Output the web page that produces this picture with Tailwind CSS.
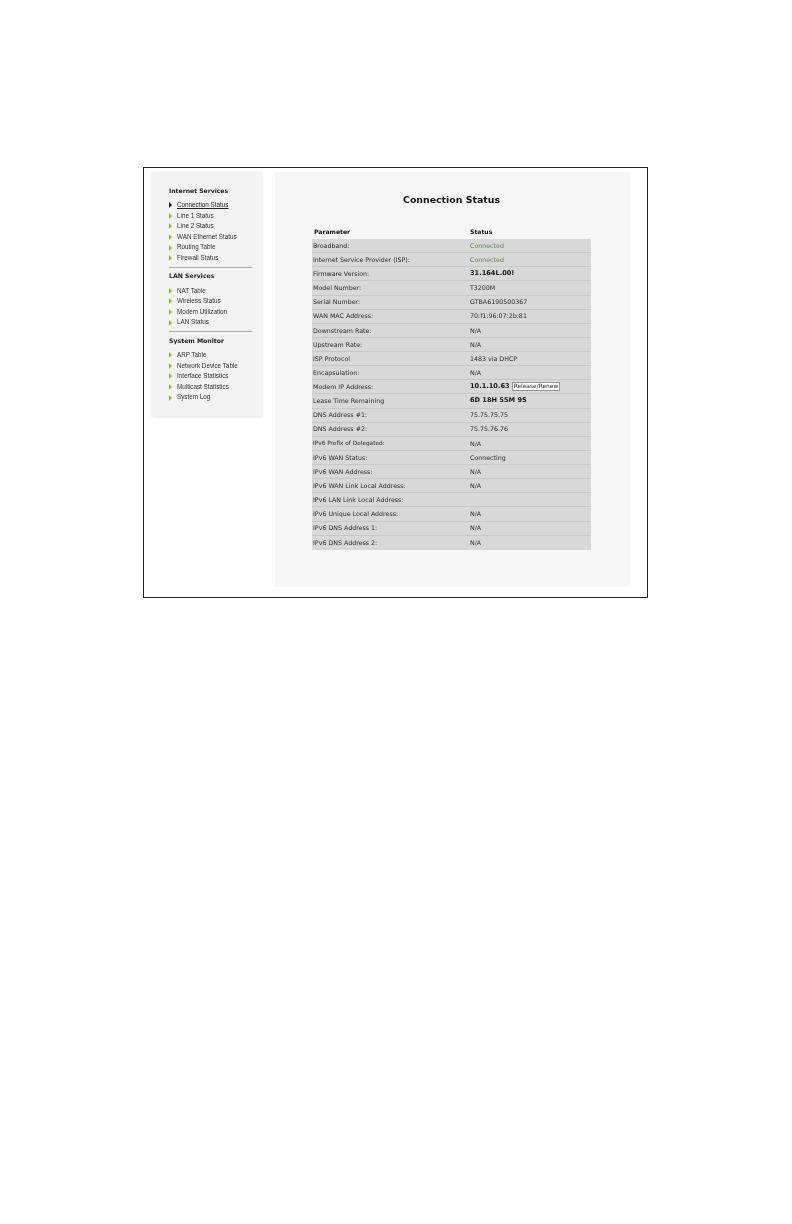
<!DOCTYPE html>
<html lang="en">
<head>
    <meta charset="UTF-8">
    <meta name="viewport" content="width=device-width, initial-scale=1.0">
    <title>Connection Status</title>
    <script src="https://cdn.jsdelivr.net/npm/@tailwindcss/browser@4"></script>
</head>
<body class="bg-white min-h-screen pt-[167px] pl-[143px]">
    <!-- Figure frame -->
    <div class="w-[505px] h-[431px] border border-[#222] pt-[4px] pl-[8px] flex items-start gap-[13px] blur-[0.35px]">
        <!-- Sidebar -->
        <div class="w-[110px] h-[244px] shrink-0 bg-[#f3f3f3] shadow-[0_1px_3px_#e2e2e2] pt-[14px] pl-[17px] pr-[10px] text-[6.3px] leading-[10.6px] text-[#333] font-['Liberation_Sans',sans-serif]">
            <h3 class="font-['DejaVu_Sans',sans-serif] font-bold text-[6.1px] leading-[10px] text-[#222] mb-[4px]">Internet Services</h3>
            <ul>
                <li class="flex items-center gap-[5px]"><svg width="3" height="6" class="shrink-0"><polygon points="0,0 3,3 0,6" fill="#111"/></svg><span class="underline text-[#222]">Connection Status</span></li>
                <li class="flex items-center gap-[5px]"><svg width="3" height="6" class="shrink-0"><polygon points="0,0 3,3 0,6" fill="#8cc020"/></svg><span>Line 1 Status</span></li>
                <li class="flex items-center gap-[5px]"><svg width="3" height="6" class="shrink-0"><polygon points="0,0 3,3 0,6" fill="#8cc020"/></svg><span>Line 2 Status</span></li>
                <li class="flex items-center gap-[5px]"><svg width="3" height="6" class="shrink-0"><polygon points="0,0 3,3 0,6" fill="#8cc020"/></svg><span>WAN Ethernet Status</span></li>
                <li class="flex items-center gap-[5px]"><svg width="3" height="6" class="shrink-0"><polygon points="0,0 3,3 0,6" fill="#8cc020"/></svg><span>Routing Table</span></li>
                <li class="flex items-center gap-[5px]"><svg width="3" height="6" class="shrink-0"><polygon points="0,0 3,3 0,6" fill="#8cc020"/></svg><span>Firewall Status</span></li>
            </ul>
            <hr class="border-[#aaa] mt-[3px] mb-[3px]">
            <h3 class="font-['DejaVu_Sans',sans-serif] font-bold text-[6.2px] leading-[10px] text-[#222] mb-[5px]">LAN Services</h3>
            <ul>
                <li class="flex items-center gap-[5px]"><svg width="3" height="6" class="shrink-0"><polygon points="0,0 3,3 0,6" fill="#8cc020"/></svg><span>NAT Table</span></li>
                <li class="flex items-center gap-[5px]"><svg width="3" height="6" class="shrink-0"><polygon points="0,0 3,3 0,6" fill="#8cc020"/></svg><span>Wireless Status</span></li>
                <li class="flex items-center gap-[5px]"><svg width="3" height="6" class="shrink-0"><polygon points="0,0 3,3 0,6" fill="#8cc020"/></svg><span>Modem Utilization</span></li>
                <li class="flex items-center gap-[5px]"><svg width="3" height="6" class="shrink-0"><polygon points="0,0 3,3 0,6" fill="#8cc020"/></svg><span>LAN Status</span></li>
            </ul>
            <hr class="border-[#aaa] mt-[3px] mb-[4px]">
            <h3 class="font-['DejaVu_Sans',sans-serif] font-bold text-[6.2px] leading-[10px] text-[#222] mb-[4px]">System Monitor</h3>
            <ul>
                <li class="flex items-center gap-[5px]"><svg width="3" height="6" class="shrink-0"><polygon points="0,0 3,3 0,6" fill="#8cc020"/></svg><span>ARP Table</span></li>
                <li class="flex items-center gap-[5px]"><svg width="3" height="6" class="shrink-0"><polygon points="0,0 3,3 0,6" fill="#8cc020"/></svg><span>Network Device Table</span></li>
                <li class="flex items-center gap-[5px]"><svg width="3" height="6" class="shrink-0"><polygon points="0,0 3,3 0,6" fill="#8cc020"/></svg><span>Interface Statistics</span></li>
                <li class="flex items-center gap-[5px]"><svg width="3" height="6" class="shrink-0"><polygon points="0,0 3,3 0,6" fill="#8cc020"/></svg><span>Multicast Statistics</span></li>
                <li class="flex items-center gap-[5px]"><svg width="3" height="6" class="shrink-0"><polygon points="0,0 3,3 0,6" fill="#8cc020"/></svg><span>System Log</span></li>
            </ul>
        </div>

        <!-- Main panel -->
        <div class="w-[355px] h-[415px] shrink-0 bg-[#f7f7f7] pt-[21px] pl-[37px] font-['DejaVu_Sans',sans-serif] text-[6.3px] text-[#2a2a2a]">
            <h1 class="w-[279px] text-center font-bold text-[9.4px] leading-[13px] text-[#111]">Connection Status</h1>
            <div class="w-[279px] mt-[20px] grid grid-cols-[156px_1fr] h-[11px] items-center pl-[2px] font-bold text-[6.1px] text-[#111]">
                <span>Parameter</span><span>Status</span>
            </div>
            <!-- Status table -->
            <div class="w-[279px] mt-[2px] bg-[#d8d8d8] divide-y divide-[#c8c8c8] grid auto-rows-[14.14px]">
                <div class="grid grid-cols-[157px_1fr] items-center pl-[1px]"><span>Broadband:</span><span class="text-[#5f8a4a]">Connected</span></div>
                <div class="grid grid-cols-[157px_1fr] items-center pl-[1px]"><span>Internet Service Provider (ISP):</span><span class="text-[#5f8a4a]">Connected</span></div>
                <div class="grid grid-cols-[157px_1fr] items-center pl-[1px]"><span>Firmware Version:</span><span class="font-bold text-[6.6px] text-[#111]">31.164L.00!</span></div>
                <div class="grid grid-cols-[157px_1fr] items-center pl-[1px]"><span>Model Number:</span><span>T3200M</span></div>
                <div class="grid grid-cols-[157px_1fr] items-center pl-[1px]"><span>Serial Number:</span><span>GTBA6190500367</span></div>
                <div class="grid grid-cols-[157px_1fr] items-center pl-[1px]"><span>WAN MAC Address:</span><span>70:f1:96:07:2b:81</span></div>
                <div class="grid grid-cols-[157px_1fr] items-center pl-[1px]"><span>Downstream Rate:</span><span>N/A</span></div>
                <div class="grid grid-cols-[157px_1fr] items-center pl-[1px]"><span>Upstream Rate:</span><span>N/A</span></div>
                <div class="grid grid-cols-[157px_1fr] items-center pl-[1px]"><span>ISP Protocol</span><span>1483 via DHCP</span></div>
                <div class="grid grid-cols-[157px_1fr] items-center pl-[1px]"><span>Encapsulation:</span><span>N/A</span></div>
                <div class="grid grid-cols-[157px_1fr] items-center pl-[1px]"><span>Modem IP Address:</span><span class="flex items-center gap-[2px]"><b class="text-[6.6px] text-[#111]">10.1.10.63</b><span class="bg-white border border-[#999] text-[5.9px] leading-[7px] px-[1px] whitespace-nowrap">Release/Renew</span></span></div>
                <div class="grid grid-cols-[157px_1fr] items-center pl-[1px]"><span>Lease Time Remaining</span><span class="font-bold text-[6.6px] text-[#111]">6D 18H 55M 9S</span></div>
                <div class="grid grid-cols-[157px_1fr] items-center pl-[1px]"><span>DNS Address #1:</span><span>75.75.75.75</span></div>
                <div class="grid grid-cols-[157px_1fr] items-center pl-[1px]"><span>DNS Address #2:</span><span>75.75.76.76</span></div>
                <div class="grid grid-cols-[157px_1fr] items-center pl-[1px]"><span class="text-[5.8px]">IPv6 Prefix of Delegated:</span><span>N/A</span></div>
                <div class="grid grid-cols-[157px_1fr] items-center pl-[1px]"><span>IPv6 WAN Status:</span><span>Connecting</span></div>
                <div class="grid grid-cols-[157px_1fr] items-center pl-[1px]"><span>IPv6 WAN Address:</span><span>N/A</span></div>
                <div class="grid grid-cols-[157px_1fr] items-center pl-[1px]"><span>IPv6 WAN Link Local Address:</span><span>N/A</span></div>
                <div class="grid grid-cols-[157px_1fr] items-center pl-[1px]"><span>IPv6 LAN Link Local Address:</span><span></span></div>
                <div class="grid grid-cols-[157px_1fr] items-center pl-[1px]"><span>IPv6 Unique Local Address:</span><span>N/A</span></div>
                <div class="grid grid-cols-[157px_1fr] items-center pl-[1px]"><span>IPv6 DNS Address 1:</span><span>N/A</span></div>
                <div class="grid grid-cols-[157px_1fr] items-center pl-[1px]"><span>IPv6 DNS Address 2:</span><span>N/A</span></div>
            </div>
        </div>
    </div>
</body>
</html>
